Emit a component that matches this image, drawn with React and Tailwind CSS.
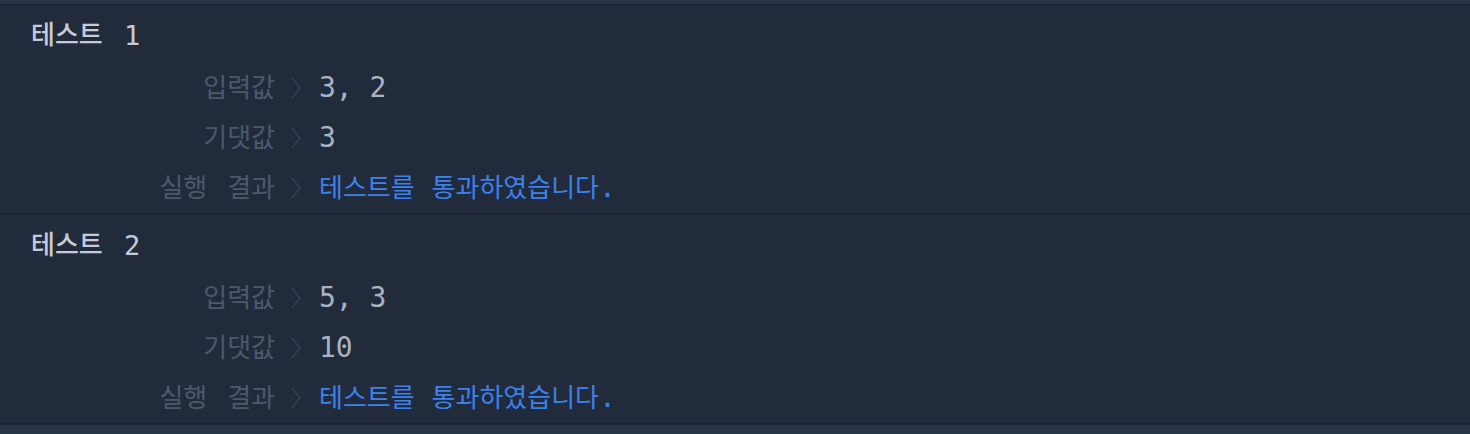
const tests = [
  { name: '테스트 1', input: '3, 2', expected: '3' },
  { name: '테스트 2', input: '5, 3', expected: '10' },
];

// Korean glyphs get their own size so their advance matches the reference pitch
function Ko({ children, className = '' }) {
  return <span className={`text-[26px] ${className}`}>{children}</span>;
}

function Chevron() {
  return (
    <svg width="14" height="24" viewBox="0 0 14 24" className="shrink-0">
      <path d="M3 2 L11 12 L3 22" fill="none" stroke="#364154" strokeWidth="1.4" />
    </svg>
  );
}

function Row({ label, children }) {
  return (
    <div className="flex h-[50px] items-center">
      <div className="w-[275px] text-right text-[#4d596b] whitespace-pre">{label}</div>
      <div className="ml-[14px] mr-[16px] flex items-center">
        <Chevron />
      </div>
      <div className="flex items-center">{children}</div>
    </div>
  );
}

function TestBlock({ test }) {
  const [word, num] = test.name.split(' ');
  return (
    <div className="pt-[10px] border-b-2 border-[#1b2332]">
      <div className="flex h-[40px] items-center pl-[31px] text-[#c5ccd7] font-medium whitespace-pre">
        <Ko>{word}</Ko>
        <span className="text-[27px] ml-[5px]"> {num}</span>
      </div>
      <div className="pt-[8px]">
        <Row label={<Ko>입력값</Ko>}>
          <span className="text-[28px] text-[#a8b3c3] whitespace-pre">{test.input}</span>
        </Row>
        <Row label={<Ko>기댓값</Ko>}>
          <span className="text-[28px] text-[#a8b3c3]">{test.expected}</span>
        </Row>
        <Row
          label={
            <>
              <Ko>실행</Ko>
              <span className="text-[28px] mr-[3px]"> </span>
              <Ko>결과</Ko>
            </>
          }
        >
          <span className="text-[#3b82ec] whitespace-pre">
            <Ko>테스트를</Ko>
            <span className="text-[28px]"> </span>
            <Ko>통과하였습니다</Ko>
            <span className="text-[28px]">.</span>
          </span>
        </Row>
      </div>
    </div>
  );
}

export default function App() {
  return (
    <div
      className="w-[1470px] h-[434px] overflow-hidden bg-[#222b3c] flex flex-col leading-none"
      style={{ fontFamily: '"DejaVu Sans Mono", "Noto Sans CJK KR", monospace' }}
    >
      <div className="h-[4px] bg-[#283546] border-b border-[#1c2535] box-content" />
      {tests.map((t) => (
        <TestBlock key={t.name} test={t} />
      ))}
      <div className="flex-1 bg-[#283546]" />
    </div>
  );
}
